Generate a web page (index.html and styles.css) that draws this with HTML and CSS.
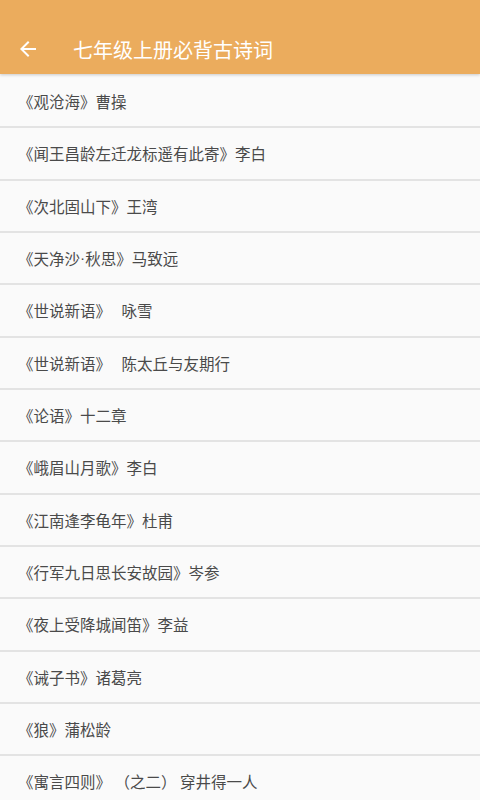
FILE: index.html
```html
<!DOCTYPE html>
<html lang="zh">
<head>
    <meta charset="UTF-8">
    <meta name="viewport" content="width=device-width, initial-scale=1.0">
    <title>七年级上册必背古诗词</title>
    <link rel="stylesheet" href="styles.css">
</head>
<body>
    <div class="toolbar">
        <a class="back" href="#">
            <svg width="24" height="24" viewBox="0 0 24 24"><path d="M20 11H7.83l5.59-5.59L12 4l-8 8 8 8 1.41-1.41L7.83 13H20v-2z" fill="#fff"/></svg>
        </a>
        <h1>七年级上册必背古诗词</h1>
    </div>
    <ul class="poem-list">
        <li>《观沧海》曹操</li>
        <li>《闻王昌龄左迁龙标遥有此寄》李白</li>
        <li>《次北固山下》王湾</li>
        <li>《天净沙<span class="dot">·</span>秋思》马致远</li>
        <li>《世说新语》&nbsp;&nbsp;&nbsp;咏雪</li>
        <li>《世说新语》&nbsp;&nbsp;&nbsp;陈太丘与友期行</li>
        <li>《论语》十二章</li>
        <li>《峨眉山月歌》李白</li>
        <li>《江南逢李龟年》杜甫</li>
        <li>《行军九日思长安故园》岑参</li>
        <li>《夜上受降城闻笛》李益</li>
        <li>《诫子书》诸葛亮</li>
        <li>《狼》蒲松龄</li>
        <li>《寓言四则》&nbsp;（之二） 穿井得一人</li>
    </ul>
</body>
</html>
```

FILE: styles.css
```css
body {
    margin: 0;
    padding: 0;
    background-color: #fafafa;
    font-family: "Noto Sans CJK SC", "Noto Sans", sans-serif;
    overflow: hidden;
}

/* top bar, the status bar area is part of it */
.toolbar {
    height: 74px;
    background: #ebac5d;
    display: flex;
    align-items: center;
    padding-top: 24px;
    box-sizing: border-box;
    box-shadow: 0 1px 3px rgba(0, 0, 0, 0.2);
    position: relative;
}

.toolbar .back {
    display: flex;
    width: 24px;
    height: 24px;
    margin-left: 16px;
}

.toolbar h1 {
    margin: 0 0 0 33px;
    font-size: 20px;
    font-weight: normal;
    color: #fff;
}

.poem-list {
    list-style: none;
    margin: 0;
    padding: 2px 0 0;
}

.poem-list li {
    height: 50.33px;
    display: flex;
    align-items: center;
    padding-left: 18px;
    font-size: 15.5px;
    color: #4a4a4a;
    border-bottom: 2px solid #e3e3e3;
    white-space: pre;
}

.dot {
    font-family: "Liberation Sans", sans-serif;
}
```
